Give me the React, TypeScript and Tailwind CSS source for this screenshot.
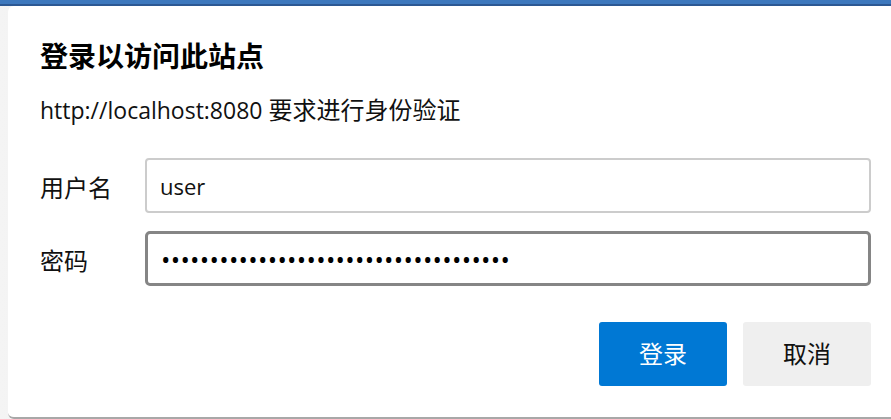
import React from 'react';

const font = '"Open Sans", "Noto Sans CJK SC", sans-serif';

export default function App() {
  const password = '•'.repeat(36);

  return (
    <div className="w-[891px] h-[419px] overflow-hidden bg-white flex flex-col" style={{ fontFamily: font }}>
      {/* Browser bar edge */}
      <div className="h-[6px] shrink-0 bg-[#3d78bd] border-b-2 border-[#2c5893]" />

      <div className="flex flex-1 bg-linear-to-r from-[#f4f4f4] to-[#d5d5d5]">
        <div className="w-[8px] shrink-0" />

        {/* Dialog */}
        <div className="flex-1 h-[413px] bg-white rounded-l-[6px] border-b-2 border-[#a8a8a8] pl-[32px] pr-[20px] pt-[32px] text-[#111]">
          <h1 className="text-[28px] leading-[36px] font-bold text-black">登录以访问此站点</h1>
          <p className="mt-[20px] text-[23px] leading-[32px]">
            http://localhost:8080 <span className="text-[24px]">要求进行身份验证</span>
          </p>

          <div className="mt-[32px] flex flex-col gap-[18px]">
            <div className="flex items-center">
              <label className="w-[105px] shrink-0 text-[24px] pt-[4px]">用户名</label>
              <input
                className="flex-1 h-[55px] rounded-[4px] border-2 border-[#cccccc] pl-[13px] text-[22px] text-[#111] outline-none"
                style={{ fontFamily: font }}
                defaultValue="user"
              />
            </div>
            <div className="flex items-center">
              <label className="w-[105px] shrink-0 text-[24px] pt-[4px]">密码</label>
              <input
                type="password"
                className="flex-1 h-[55px] rounded-[5px] border-[3px] border-[#858585] pl-[13px] text-[25px] tracking-[0.3px] text-black outline-none"
                style={{ fontFamily: font }}
                defaultValue={password}
              />
            </div>
          </div>

          <div className="mt-[36px] flex justify-end gap-[16px]">
            <button className="w-[128px] h-[64px] rounded-[3px] bg-[#0078d4] text-white text-[24px]">登录</button>
            <button className="w-[128px] h-[64px] rounded-[3px] bg-[#efefef] text-[#111] text-[24px]">取消</button>
          </div>
        </div>
      </div>
    </div>
  );
}
